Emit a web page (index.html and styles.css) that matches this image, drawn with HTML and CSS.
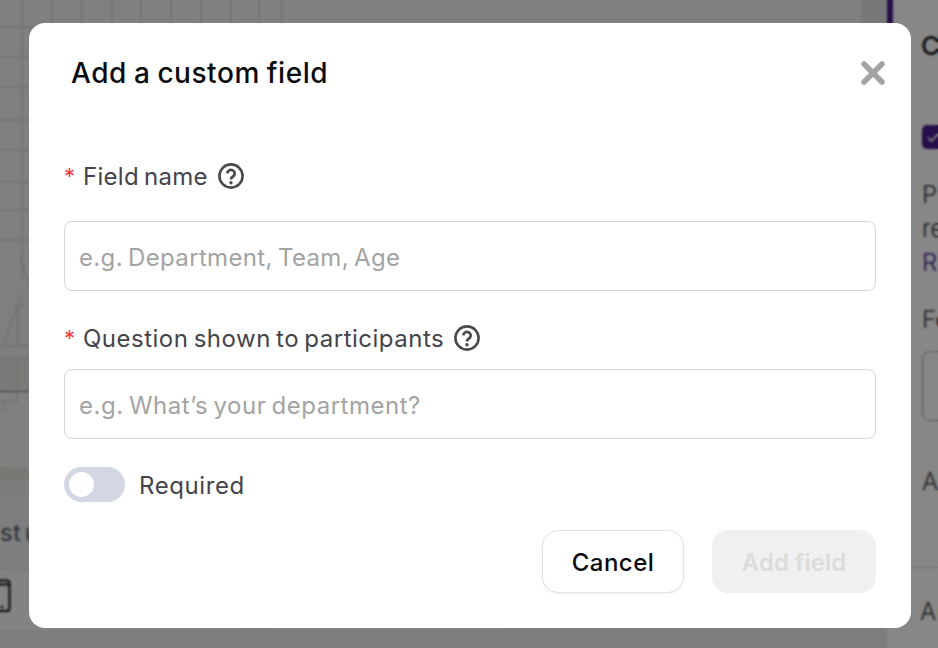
FILE: index.html
```html
<!DOCTYPE html>
<html lang="en">
<head>
<meta charset="utf-8">
<title>Add a custom field</title>
<link rel="stylesheet" href="styles.css">
</head>
<body>
<div class="app">
  <main class="canvas">
    <div class="workspace">
      <div class="preview">
        <svg class="stage" viewBox="0 0 861 498" aria-hidden="true">
          <g stroke="#dadcdb" stroke-width="2" fill="none">
            <path d="M22 0V280 M52 0V280 M82 0V280 M112 0V280 M141 0V280 M171 0V280 M201 0V280 M231 0V280 M259 0V280 M282 0V280"/>
            <path d="M0 27H282 M0 57H282 M0 87H282 M0 120H282 M0 150H282 M0 182H282 M0 210H282 M0 240H282"/>
          </g>
          <rect x="0" y="280" width="861" height="78" fill="#eff0ee"/>
          <rect x="0" y="358" width="861" height="34" fill="#e6e6e2"/>
          <rect x="0" y="392" width="861" height="75" fill="#f1f1ef"/>
          <rect x="0" y="467" width="861" height="12" fill="#e2e2de"/>
          <rect x="0" y="479" width="861" height="19" fill="#eaeae8"/>
          <path d="M20 256L28 282M21 295L3 346H29M17 305H26M18 305V346" fill="none" stroke="#d4d3cf" stroke-width="1.5"/>
          <path d="M0 358H29M17 358V402M0 402H17M5 402V410H0" fill="none" stroke="#d8d8d4" stroke-width="1.5"/>
          <path d="M0 391.5H861" stroke="#777" stroke-width="1"/>
        </svg>
        <div class="hint">st u</div>
      </div>
      <div class="scroller"></div>
    </div>
    <div class="toolbar">
      <div class="tool-card first-card">
        <svg class="device" viewBox="0 0 12 34" aria-hidden="true">
          <path d="M-4 1.5H7A2.5 2.5 0 0 1 9.5 4V29.5A2.5 2.5 0 0 1 7 32H-4M-4 5.5H9" fill="none" stroke="#111" stroke-width="2"/>
          <circle cx="2" cy="28" r="1.3" fill="#111"/>
        </svg>
      </div>
      <div class="tool-card"></div>
    </div>
  </main>
  <aside class="panel">
    <h2 class="panel-title">C</h2>
    <span class="check-box"><svg class="check-mark" viewBox="0 0 16 16"><path d="M3 8.5L6.5 12L13 5" fill="none" stroke="#ddd" stroke-width="2"/></svg></span>
    <p class="panel-text">P<br>re<br><span class="panel-link">R</span></p>
    <p class="panel-label">Fo</p>
    <div class="panel-select"></div>
    <p class="panel-label panel-add">A</p>
    <div class="panel-footer">Au</div>
  </aside>
</div>
<div class="scrim"></div>
<section class="modal">
  <header class="modal-head">
    <h1 class="modal-title">Add a custom field</h1>
    <button class="close" aria-label="Close">
      <svg class="close-icon" viewBox="0 0 24 24"><path d="M3 3L21 21M21 3L3 21" fill="none" stroke="#a3a3a3" stroke-width="5.5" stroke-linecap="round"/></svg>
    </button>
  </header>
  <div class="field first">
    <label class="label"><span class="star">*</span>Field name
      <svg class="help" viewBox="0 0 26 26"><circle cx="13" cy="13" r="11.6" fill="none" stroke="#4a4a4a" stroke-width="2.6"/><path d="M9.3 10.4a3.7 3.6 0 1 1 5.7 3.1c-1.3 .8-2 1.3-2 2.9" fill="none" stroke="#4a4a4a" stroke-width="2.7"/><circle cx="13" cy="19.8" r="1.7" fill="#4a4a4a"/></svg>
    </label>
    <div class="input">e.g. Department, Team, Age</div>
  </div>
  <div class="field second">
    <label class="label"><span class="star">*</span>Question shown to participants
      <svg class="help" viewBox="0 0 26 26"><circle cx="13" cy="13" r="11.6" fill="none" stroke="#4a4a4a" stroke-width="2.6"/><path d="M9.3 10.4a3.7 3.6 0 1 1 5.7 3.1c-1.3 .8-2 1.3-2 2.9" fill="none" stroke="#4a4a4a" stroke-width="2.7"/><circle cx="13" cy="19.8" r="1.7" fill="#4a4a4a"/></svg>
    </label>
    <div class="input">e.g. What’s your department?</div>
  </div>
  <div class="toggle-row">
    <span class="toggle"><span class="knob"></span></span>
    <span class="toggle-label">Required</span>
  </div>
  <footer class="actions">
    <button class="btn cancel">Cancel</button>
    <button class="btn add">Add field</button>
  </footer>
</section>
</body>
</html>
```
FILE: styles.css
```css
* { box-sizing: border-box; }
html, body { margin: 0; height: 100%; overflow: hidden; }
body { font-family: "Inter", "Liberation Sans", sans-serif; background: #fff; }

.app { display: flex; width: 938px; height: 648px; }
.canvas { width: 887px; flex: none; display: flex; flex-direction: column; background: #ecedef; }
.workspace { display: flex; height: 570px; flex: none; }
.preview { width: 861px; display: flex; flex-direction: column; background: #f1f2f1; }
.stage { display: block; width: 861px; height: 498px; flex: none; }
.hint { flex: 1; padding-top: 20px; background: #edeef1; border-bottom: 1px solid #dedfe2; font-size: 24px; line-height: 30px; word-spacing: -3.5px; letter-spacing: .3px; color: #54565c; }
.scroller { flex: 1; background: #dfe2e4; }
.toolbar { display: flex; gap: 15px; height: 78px; padding-bottom: 16px; }
.tool-card { width: 248px; background: #f7f7f7; border: 1px solid #dfe0e2; border-top: 0; border-radius: 0 0 10px 10px; }
.first-card { width: 247px; border-left: 0; border-radius: 0 0 10px 0; padding-top: 9px; }
.device { display: block; width: 12px; height: 34px; overflow: visible; }

.panel { flex: 1; min-width: 0; position: relative; overflow: hidden; background: #fff; padding: 30px 0 0 34px; color: #3a3a3f; font-size: 24px; white-space: nowrap; }
.panel::before { content: ""; position: absolute; left: 0; top: 0; width: 6px; height: 60px; background: #4b1d8f; }
.panel-title { margin: 0; font-size: 26px; line-height: 32px; font-weight: 500; color: #1b1b22; }
.check-box { display: block; width: 30px; height: 24px; margin: 63px 0 0 1px; border-radius: 5px; background: #4b1d8f; padding: 4px 0 0 3px; }
.check-mark { display: block; width: 16px; height: 16px; }
.panel-text { margin: 29px 0 0 1px; line-height: 34px; font-weight: 300; }
.panel-link { color: #4b1d8f; }
.panel-label { margin: 24px 0 0 1px; line-height: 32px; font-weight: 300; }
.panel-select { width: 60px; height: 70px; margin: 15px 0 0 1px; border: 1px solid #a9a9b0; border-radius: 8px; }
.panel-add { margin-top: 45px; }
.panel-footer { margin: 69px 0 0 -34px; padding: 29px 0 0 33px; border-top: 1px solid #dcdcdc; font-weight: 300; }

.scrim { position: fixed; inset: 0; background: rgba(0, 0, 0, .47); backdrop-filter: blur(1px); }
.modal {
  position: fixed; left: 29px; top: 23px; width: 882px; height: 605px;
  background: #fff; border-radius: 16px; padding: 0 35px;
  display: flex; flex-direction: column;
}
.modal-head { display: flex; justify-content: space-between; align-items: center; height: 100px; margin-right: -9px; padding-left: 7px; }
.modal-title { margin: 0; font-size: 28px; font-weight: 550; color: #0b0b0f; letter-spacing: .55px; word-spacing: -1px; }
.close { display: block; width: 24px; height: 24px; padding: 0; border: 0; background: none; }
.close-icon { display: block; width: 24px; height: 24px; }

.field.first { margin-top: 37px; }
.field.second { margin-top: 31px; }
.label { display: flex; align-items: center; height: 32px; font-size: 24px; color: #44444c; letter-spacing: .3px; word-spacing: -2px; }
.field.second .label { letter-spacing: .5px; }
.star { width: 19px; color: #f5363f; font-size: 22px; letter-spacing: 0; }
.help { width: 26px; height: 26px; margin-left: 10px; }
.input {
  height: 70px; margin-top: 29px; padding: 2px 14px 0; display: flex; align-items: center;
  border: 1px solid #d3d5e2; border-radius: 8px; font-size: 24px; color: #a3a3a3; letter-spacing: .35px; word-spacing: -2px;
}
.field.second .input { margin-top: 15px; letter-spacing: .52px; }
.toggle-row { display: flex; align-items: center; gap: 14px; margin-top: 28px; }
.toggle { display: block; width: 61px; height: 35px; border-radius: 18px; background: #d3d7e3; padding: 5px; }
.knob { display: block; width: 25px; height: 25px; border-radius: 50%; background: #fff; }
.toggle-label { padding-top: 2px; font-size: 24px; color: #44444c; letter-spacing: .6px; }
.actions { display: flex; justify-content: flex-end; gap: 28px; margin-top: 28px; }
.btn { height: 63px; padding: 2px 0 0; border-radius: 16px; font-family: inherit; font-size: 24px; font-weight: 500; }
.cancel { width: 142px; background: #fff; border: 1px solid #e2e2e4; color: #0b0b0f; letter-spacing: .5px; box-shadow: 0 1px 3px rgba(0, 0, 0, .05); }
.add { width: 164px; background: #f0f0f0; border: 0; color: #dcdcdc; font-weight: 600; }
```
